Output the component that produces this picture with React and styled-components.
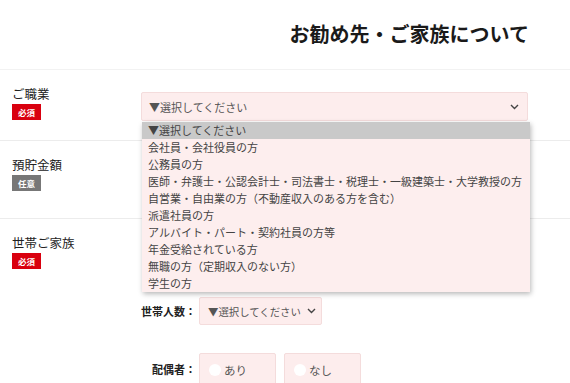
import React from "react";
import styled, { createGlobalStyle } from "styled-components";

const GlobalStyle = createGlobalStyle`
  html, body {
    margin: 0;
    padding: 0;
    background: #fff;
  }
  body {
    font-family: "Noto Sans CJK JP", "Noto Sans", sans-serif;
    color: #222;
  }
`;

const Page = styled.div`
  width: 570px;
  height: 383px;
  overflow: hidden;
`;

const Header = styled.header`
  height: 70px;
  border-bottom: 1px solid #f2f2f2;
  display: flex;
  justify-content: flex-end;
  padding: 20px 41px 0 0;
  box-sizing: border-box;
`;

const Title = styled.h1`
  margin: 0;
  font-size: 20px;
  line-height: 28px;
  font-weight: 700;
  color: #1a1a1a;
`;

const Row = styled.section`
  display: grid;
  grid-template-columns: 141px 1fr;
  min-height: ${(p) => p.$height}px;
  border-bottom: ${(p) => (p.$last ? "none" : "1px solid #ececec")};
  box-sizing: border-box;
`;

const LabelCol = styled.div`
  padding: 15px 0 0 12px;
  display: flex;
  flex-direction: column;
  align-items: flex-start;
  gap: 1px;
`;

const Label = styled.div`
  font-size: 12.5px;
  line-height: 18px;
  color: #222;
`;

const Badge = styled.span`
  display: inline-block;
  width: 29px;
  height: 16px;
  line-height: 16px;
  text-align: center;
  font-size: 8.5px;
  font-weight: 700;
  color: #fff;
  background: ${(p) => (p.$optional ? "#777" : "#d9000f")};
`;

const Content = styled.div`
  padding: ${(p) => p.$top || 0}px 42px 0 0;
  position: relative;
`;

const SelectBox = styled.div`
  position: relative;
  width: ${(p) => (p.$width ? `${p.$width}px` : "100%")};
  height: ${(p) => p.$h || 29}px;
  box-sizing: border-box;
  background: #fdeded;
  border: 1px solid #f4dcdc;
  border-radius: 2px;
  display: flex;
  align-items: center;
  justify-content: space-between;
  padding: 0 ${(p) => (p.$width ? 5 : 8)}px 0 ${(p) => (p.$width ? 8 : 7)}px;
  font-size: ${(p) => (p.$width ? 10.4 : 11)}px;
  color: #555;
  white-space: nowrap;
`;

const Chevron = () => (
  <svg width="9" height="6" viewBox="0 0 9 6">
    <polyline points="1,1 4.5,4.5 8,1" fill="none" stroke="#444" strokeWidth="1.4" />
  </svg>
);

const Options = styled.ul`
  position: absolute;
  top: calc(100% + 2px);
  left: 0;
  width: 388px;
  margin: 0;
  padding: 0;
  list-style: none;
  background: #fdeeee;
  box-shadow: 1px 2px 5px rgba(0, 0, 0, 0.28);
  z-index: 5;
`;

const Option = styled.li`
  height: 17px;
  line-height: 17px;
  padding-left: 6px;
  font-size: 11px;
  color: #444;
  background: ${(p) => (p.$active ? "#c9c9c9" : "transparent")};
  white-space: nowrap;
`;

const SubRow = styled.div`
  display: flex;
  align-items: ${(p) => (p.$top ? "flex-start" : "center")};
  margin-left: -141px;
  margin-bottom: ${(p) => p.$gap || 0}px;
`;

const SubLabel = styled.div`
  width: 199px;
  padding-right: 3px;
  box-sizing: border-box;
  text-align: right;
  font-size: 11px;
  font-weight: 700;
  color: #222;
  padding-top: ${(p) => p.$pt || 0}px;
`;

const RadioGroup = styled.div`
  display: flex;
  gap: 8px;
`;

const RadioBox = styled.label`
  width: 77px;
  height: 40px;
  box-sizing: border-box;
  background: #fdeded;
  border: 1px solid #f4dcdc;
  border-radius: 2px;
  display: flex;
  align-items: flex-start;
  padding: 8px 0 0 9px;
  gap: 3px;
  font-size: 11.5px;
  color: #555;
`;

const Circle = styled.span`
  width: 12px;
  height: 12px;
  border-radius: 50%;
  background: #fff;
  margin-top: 2px;
`;

const jobs = [
  "▼選択してください",
  "会社員・会社役員の方",
  "公務員の方",
  "医師・弁護士・公認会計士・司法書士・税理士・一級建築士・大学教授の方",
  "自営業・自由業の方（不動産収入のある方を含む）",
  "派遣社員の方",
  "アルバイト・パート・契約社員の方等",
  "年金受給されている方",
  "無職の方（定期収入のない方）",
  "学生の方",
];

export default function App() {
  return (
    <Page>
      <GlobalStyle />
      <Header>
        <Title>お勧め先・ご家族について</Title>
      </Header>

      <Row $height={71}>
        <LabelCol>
          <Label>ご職業</Label>
          <Badge>必須</Badge>
        </LabelCol>
        <Content $top={22}>
          <SelectBox>
            <span>▼選択してください</span>
            <Chevron />
            <Options>
              {jobs.map((j, i) => (
                <Option key={j} $active={i === 0}>
                  {j}
                </Option>
              ))}
            </Options>
          </SelectBox>
        </Content>
      </Row>

      <Row $height={78}>
        <LabelCol>
          <Label>預貯金額</Label>
          <Badge $optional>任意</Badge>
        </LabelCol>
        <Content />
      </Row>

      <Row $height={164} $last>
        <LabelCol>
          <Label>世帯ご家族</Label>
          <Badge>必須</Badge>
        </LabelCol>
        <Content $top={78}>
          <SubRow $gap={28}>
            <SubLabel>世帯人数：</SubLabel>
            <SelectBox $width={123} $h={28}>
              <span>▼選択してください</span>
              <Chevron />
            </SelectBox>
          </SubRow>
          <SubRow $top>
            <SubLabel $pt={8}>配偶者：</SubLabel>
            <RadioGroup>
              <RadioBox>
                <Circle />
                あり
              </RadioBox>
              <RadioBox>
                <Circle />
                なし
              </RadioBox>
            </RadioGroup>
          </SubRow>
        </Content>
      </Row>
    </Page>
  );
}
